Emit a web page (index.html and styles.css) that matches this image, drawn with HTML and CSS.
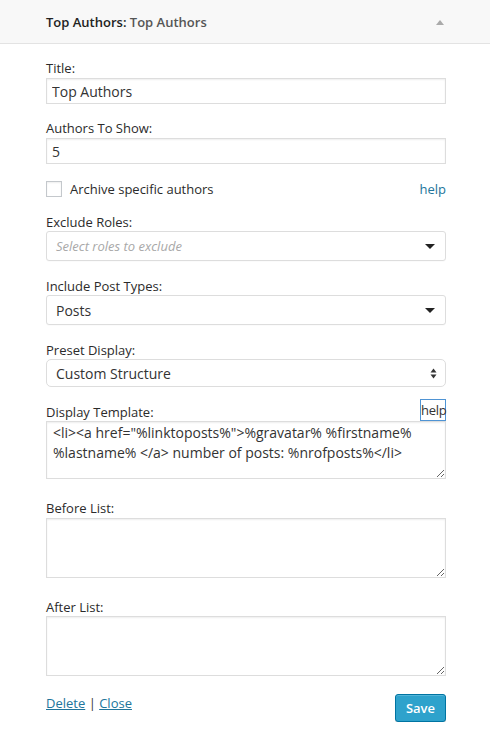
FILE: index.html
```html
<!DOCTYPE html>
<html>
<head>
<meta charset="utf-8">
<link rel="stylesheet" href="styles.css">
</head>
<body>
<div class="widget">
  <div class="widget-top">
    <h3 class="widget-title">Top Authors: <span class="in-title">Top Authors</span></h3>
    <span class="toggle"></span>
  </div>
  <div class="widget-inside">
    <div class="field">
      <label class="lbl">Title:</label>
      <input class="text" type="text" value="Top Authors">
    </div>
    <div class="field">
      <label class="lbl">Authors To Show:</label>
      <input class="text" type="text" value="5">
    </div>
    <div class="check-row">
      <label class="check-label"><input class="check" type="checkbox">Archive specific authors</label>
      <a class="help" href="#">help</a>
    </div>
    <div class="field field-sel">
      <label class="lbl">Exclude Roles:</label>
      <div class="chosen">
        <span class="placeholder">Select roles to exclude</span>
        <span class="caret"></span>
      </div>
    </div>
    <div class="field field-sel">
      <label class="lbl">Include Post Types:</label>
      <div class="chosen">
        <span class="value">Posts</span>
        <span class="caret"></span>
      </div>
    </div>
    <div class="field field-sel">
      <label class="lbl">Preset Display:</label>
      <div class="native-select">
        <span class="value">Custom Structure</span>
        <svg class="updown" width="7" height="11" viewBox="0 0 7 11"><path d="M3.5 0.5 L6.5 4.4 H0.5 Z M3.5 10.5 L6.5 6.6 H0.5 Z" fill="#333"/></svg>
      </div>
    </div>
    <div class="field field-sel">
      <div class="lbl-row">
        <label class="lbl">Display Template:</label>
        <a class="help-focus" href="#">help</a>
      </div>
      <textarea class="area">&lt;li&gt;&lt;a href="%linktoposts%"&gt;%gravatar% %firstname% %lastname% &lt;/a&gt; number of posts: %nrofposts%&lt;/li&gt;</textarea>
    </div>
    <div class="field field-area">
      <label class="lbl">Before List:</label>
      <textarea class="area"></textarea>
    </div>
    <div class="field field-area">
      <label class="lbl lbl-tight">After List:</label>
      <textarea class="area"></textarea>
    </div>
    <div class="controls">
      <div class="links"><a href="#">Delete</a> | <a href="#">Close</a></div>
      <button class="save" type="button">Save</button>
    </div>
  </div>
</div>
</body>
</html>
```
FILE: styles.css
```css
html, body {
  margin: 0;
  padding: 0;
  background: #fff;
}
body {
  font-family: "Open Sans", "Liberation Sans", sans-serif;
  color: #333;
  font-size: 13px;
}
.widget-top {
  height: 43px;
  background: #f8f8f8;
  border-bottom: 1px solid #e3e3e3;
  display: flex;
  align-items: center;
  justify-content: space-between;
  padding: 0 46px 0 46px;
}
.widget-title {
  margin: 0;
  font-size: 13px;
  font-weight: 600;
  color: #222;
  line-height: 18px;
}
.in-title {
  color: #555;
}
.toggle {
  width: 0;
  height: 0;
  border-left: 4px solid transparent;
  border-right: 4px solid transparent;
  border-bottom: 5px solid #aaa;
  margin-top: 2px;
}
.widget-inside {
  padding: 15px 44px 0 46px;
  display: flex;
  flex-direction: column;
}
.field {
  display: flex;
  flex-direction: column;
}
.field + .field {
  margin-top: 15px;
}
.field-sel + .field-sel {
  margin-top: 16px;
}
.check-row + .field {
  margin-top: 13px;
}
.field.field-area {
  margin-top: 20px;
}
.lbl {
  line-height: 18px;
  margin-bottom: 1px;
  font-size: 13px;
  color: #2b2b2b;
}
.field-sel .lbl {
  margin-bottom: 0;
}
.lbl-tight {
  margin-bottom: 0;
}
.text {
  box-sizing: border-box;
  height: 26px;
  border: 1px solid #ddd;
  box-shadow: inset 0 1px 2px rgba(0,0,0,.07);
  font-family: "Open Sans", "Liberation Sans", sans-serif;
  font-size: 14px;
  color: #333;
  padding: 0 5px;
  margin: 0;
  width: 100%;
  outline: none;
}
.check-row {
  margin-top: 14px;
  height: 22px;
  display: flex;
  align-items: center;
  justify-content: space-between;
}
.check-label {
  display: flex;
  align-items: center;
  font-size: 13px;
  color: #2b2b2b;
}
.check {
  -webkit-appearance: none;
  appearance: none;
  width: 16px;
  height: 16px;
  margin: 0 8px 0 0;
  border: 1px solid #c4c8cc;
  background: #fff;
  box-shadow: inset 0 1px 2px rgba(0,0,0,.07);
  box-sizing: border-box;
}
.help {
  color: #21759b;
  text-decoration: none;
  font-size: 13px;
}
.chosen {
  box-sizing: border-box;
  height: 30px;
  border: 1px solid #ddd;
  border-radius: 3px;
  background: #fff;
  display: flex;
  align-items: center;
  justify-content: space-between;
  padding: 0 10px 0 9px;
  box-shadow: 0 1px 1px rgba(0,0,0,.02);
}
.placeholder {
  color: #a8a8a8;
  font-style: italic;
  font-size: 13px;
}
.value {
  font-size: 14px;
  color: #333;
}
.caret {
  width: 0;
  height: 0;
  border-left: 5px solid transparent;
  border-right: 5px solid transparent;
  border-top: 5px solid #222;
  margin-top: 1px;
}
.native-select {
  box-sizing: border-box;
  height: 28px;
  border: 1px solid #ddd;
  border-radius: 5px;
  background: #fff;
  display: flex;
  align-items: center;
  justify-content: space-between;
  padding: 0 8px 0 9px;
}
.lbl-row {
  display: flex;
  justify-content: space-between;
  align-items: flex-end;
  height: 18px;
}
.help-focus {
  box-sizing: border-box;
  width: 26px;
  height: 22px;
  line-height: 20px;
  padding: 0;
  border: 1px solid #4f94d4;
  color: #333;
  text-decoration: none;
  font-size: 13px;
  white-space: nowrap;
  letter-spacing: -0.3px;
  position: relative;
  z-index: 1;
  background: #fff;
}
.area {
  box-sizing: border-box;
  width: 100%;
  height: 58px;
  border: 1px solid #ddd;
  box-shadow: inset 0 1px 2px rgba(0,0,0,.07);
  font-family: "Open Sans", "Liberation Sans", sans-serif;
  font-size: 14px;
  line-height: 20px;
  color: #333;
  padding: 1px 6px;
  margin: 0;
  outline: none;
  display: block;
  resize: vertical;
}
.field-area .area {
  height: 60px;
}
.controls {
  margin-top: 18px;
  display: flex;
  justify-content: space-between;
  align-items: flex-start;
}
.links {
  line-height: 18px;
  font-size: 13px;
  color: #333;
}
.links a {
  color: #21759b;
  text-decoration: underline;
}
.save {
  box-sizing: border-box;
  height: 28px;
  padding: 0 10px;
  background: #2ea2cc;
  border: 1px solid #0074a2;
  border-radius: 3px;
  box-shadow: inset 0 1px 0 rgba(120,200,230,.5), 0 1px 0 rgba(0,0,0,.15);
  color: #fff;
  font-family: "Open Sans", "Liberation Sans", sans-serif;
  font-size: 13px;
  font-weight: 600;
  line-height: 26px;
}
```
